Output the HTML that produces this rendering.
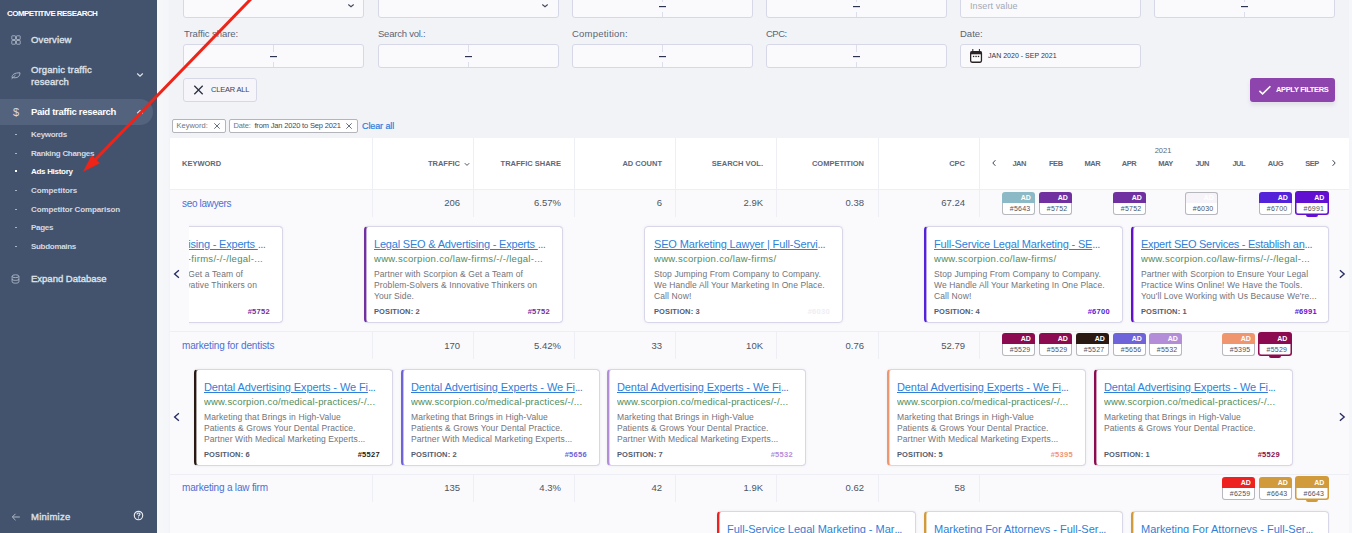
<!DOCTYPE html>
<html>
<head>
<meta charset="utf-8">
<title>Ads History</title>
<style>
*{box-sizing:border-box;margin:0;padding:0}
html,body{width:1352px;height:533px;overflow:hidden}
body{font-family:"Liberation Sans",sans-serif;background:#f2f3f7;position:relative;color:#3a4354}
.abs{position:absolute}
#sb{position:absolute;left:0;top:0;width:157px;height:533px;background:#44536d}
#sb .t{position:absolute;white-space:nowrap;line-height:12px}
#sb .h{left:7px;top:8px;font-size:8px;font-weight:bold;color:#fff;letter-spacing:-.55px}
#sb .m{left:31px;font-size:9.5px;color:#dde2ea;font-weight:normal;-webkit-text-stroke:.35px #dde2ea;letter-spacing:.12px}
#sb .s{left:31px;font-size:8px;color:#d3d9e3;font-weight:bold;letter-spacing:-.3px}
#sb .d{position:absolute;left:15px;width:2px;height:1px;background:#aab3c3}
#sb .act{position:absolute;left:0;top:99px;width:153px;height:26px;background:#54637d;border-radius:0 13px 13px 0}
.inp{position:absolute;width:181px;height:24px;background:#fafafc;border:1px solid #d6d8e7;border-radius:3px}
.inp .v{position:absolute;left:89px;top:0;width:1px;height:100%;background:#dcdeea}
.inp .g{position:absolute;left:86px;top:7px;width:7px;height:10px;background:#fafafc}
.inp .ds{position:absolute;left:86px;top:11px;width:7px;height:1px;background:#2c3350;box-shadow:0 .5px 0 rgba(44,51,80,.35)}
.lbl{position:absolute;top:28px;font-size:9.5px;color:#5b6474;white-space:nowrap;line-height:12px}
.tag{position:absolute;top:119px;height:14px;background:#fff;border:1px solid #b4b5ba;border-radius:2px;font-size:7.5px;line-height:12px;color:#6f747d;white-space:nowrap;padding-left:3.5px}
#tb{position:absolute;left:170px;top:138px;width:1179px;height:395px;background:#fff}
.th{position:absolute;top:20px;font-size:7.5px;font-weight:bold;color:#606878;white-space:nowrap;line-height:12px;letter-spacing:0}
.thr{text-align:right}
.vl{position:absolute;top:0;width:1px;background:#eeeff5}
.row{position:absolute;left:0;width:1179px;height:28px;background:#fafafc;border-top:1px solid #eeeff4}
.row .c{position:absolute;font-size:9.5px;color:#4d5564;white-space:nowrap;line-height:12px;text-align:right}
.row .k{position:absolute;left:12px;font-size:10px;color:#4a70d6;white-space:nowrap;line-height:12px;letter-spacing:-.15px}
.car{position:absolute;left:0;width:1179px;background:#fafafc}
.bd{position:absolute;width:33px;height:23px}
.bd i{position:absolute;left:0;top:0;width:33px;height:11px;display:block;border-radius:3px 3px 0 0}
.bd p{position:absolute;left:0;top:11px;width:33px;height:12px;background:#fff;border:1px solid #b6b8be;border-top:0;border-radius:0 0 3px 3px}
.bd b{position:absolute;right:4.5px;top:1px;font-size:7px;line-height:10px;color:#fff;font-weight:bold;font-style:normal;letter-spacing:-.2px}
.bd u{position:absolute;right:4.5px;top:12px;font-size:7px;line-height:10px;color:#4b5464;text-decoration:none;letter-spacing:.25px}
.bd.sel{width:34px;height:24px}
.bd.sel i{width:34px;height:12px}
.bd.sel p{top:12px;width:34px;height:12px}
.bd.sel b{right:5px;top:2px}
.bd.sel u{right:4.8px;top:13px}
.bd.sel s{position:absolute;left:11px;top:24px;width:12px;height:2px;display:block;border-radius:0 0 2px 2px}
.cd{position:absolute;width:199px;height:96px;background:#fff;border:1px solid #d8d7ea;border-radius:4px;overflow:hidden}
.cd.cl{border-left-width:2px;border-left-style:solid}
.cd.cl>div{margin-left:-1px}
.cd.cl>.id{margin-left:0}
.cd .ti{position:absolute;left:9px;top:10px;width:184px;font-size:11px;line-height:14px;color:#2f7fd8;white-space:nowrap;overflow:hidden;letter-spacing:-.23px}
.cd .ti span{text-decoration:underline}
.cd .ti q{quotes:none;letter-spacing:-.6px}
.cd .ur{position:absolute;left:9px;top:25px;width:184px;font-size:9.5px;line-height:13px;color:#4f8c5b;white-space:nowrap;overflow:hidden;letter-spacing:.3px}
.cd .de{position:absolute;left:9px;top:42px;width:188px;font-size:8.5px;line-height:11px;color:#70737b;white-space:nowrap;letter-spacing:.11px}
.cd .po{position:absolute;left:9px;top:80px;font-size:7.5px;line-height:10px;color:#535d6f;font-weight:bold;white-space:nowrap;letter-spacing:.1px}
.cd .id{position:absolute;right:12px;top:80px;font-size:7.5px;line-height:10px;font-weight:bold;white-space:nowrap;letter-spacing:.3px}
.clip{position:absolute;left:19px;width:1141px;overflow:hidden}
</style>
</head>
<body>

<div class="abs" style="left:157px;top:0;width:12px;height:533px;background:linear-gradient(90deg,#f7f8fa,#f4f5f8)"></div>
<div class="abs" style="left:1349px;top:0;width:3px;height:533px;background:#f5f6f9"></div>
<div id="sb">
  <div class="t h">COMPETITIVE RESEARCH</div>
  <div class="t m" style="top:34px">Overview</div>
  <div class="t m" style="top:64px">Organic traffic</div>
  <div class="t m" style="top:76px">research</div>
  <div class="act"></div>
  <div class="t m" style="top:106px;color:#fff;letter-spacing:-.3px;font-weight:bold;-webkit-text-stroke:0">Paid traffic research</div>
  <div class="t s" style="top:129px">Keywords</div>
  <div class="t s" style="top:148px">Ranking Changes</div>
  <div class="t s" style="top:166px;color:#fff">Ads History</div>
  <div class="t s" style="top:185px;letter-spacing:-.08px">Competitors</div>
  <div class="t s" style="top:204px;letter-spacing:-.12px">Competitor Comparison</div>
  <div class="t s" style="top:222px">Pages</div>
  <div class="t s" style="top:241px">Subdomains</div>
  <div class="t m" style="top:273px;letter-spacing:0px">Expand Database</div>
  <div class="t m" style="top:511px;letter-spacing:.25px">Minimize</div>
  <div class="d" style="top:134px"></div>
  <div class="d" style="top:153px"></div>
  <div class="d" style="top:170px;background:#fff;height:2px"></div>
  <div class="d" style="top:190px"></div>
  <div class="d" style="top:209px"></div>
  <div class="d" style="top:227px"></div>
  <div class="d" style="top:246px"></div>
  <svg class="abs" style="left:11px;top:35px" width="10" height="10" viewBox="0 0 10 10" fill="none" stroke="#b3bccb" stroke-width=".8"><rect x=".8" y=".8" width="3.7" height="3.7" rx=".4"/><rect x="5.5" y=".8" width="3.7" height="3.7" rx=".4"/><rect x=".8" y="5.5" width="3.7" height="3.7" rx=".4"/><rect x="5.5" y="5.5" width="3.7" height="3.7" rx=".4"/></svg>
  <svg class="abs" style="left:11px;top:71px" width="10" height="9" viewBox="0 0 10 9" fill="none" stroke="#aeb7c6" stroke-width=".9"><path d="M1 6.5C1 3.5 3.5 1.8 9 1.8C9 5 7 6.8 4 6.8C2.8 6.8 1.8 6.5 1 6.5Z"/><path d="M.6 7.8L4.5 4.2"/></svg>
  <svg class="abs" style="left:136px;top:72px" width="8" height="6" viewBox="0 0 8 6" fill="none" stroke="#dfe4ec" stroke-width="1.2"><path d="M1.2 1.5L4 4.2L6.8 1.5"/></svg>
  <svg class="abs" style="left:136px;top:109px" width="8" height="6" viewBox="0 0 8 6" fill="none" stroke="#dfe4ec" stroke-width="1.2"><path d="M1.2 4.2L4 1.5L6.8 4.2"/></svg>
  <div class="t" style="left:13px;top:106px;font-size:11px;color:#d5dbe5;font-weight:normal">$</div>
  <svg class="abs" style="left:11px;top:274px" width="9" height="10" viewBox="0 0 9 10" fill="none" stroke="#aeb7c6" stroke-width=".9"><ellipse cx="4.5" cy="2.2" rx="3.4" ry="1.4"/><path d="M1.1 2.2V7.8C1.1 8.6 2.6 9.2 4.5 9.2C6.4 9.2 7.9 8.6 7.9 7.8V2.2"/><path d="M1.1 5C1.1 5.8 2.6 6.4 4.5 6.4C6.4 6.4 7.9 5.8 7.9 5"/></svg>
  <svg class="abs" style="left:11px;top:512px" width="10" height="10" viewBox="0 0 10 10" fill="none" stroke="#aeb7c6" stroke-width="1"><path d="M8.8 5H1.5M4.5 1.8L1.3 5L4.5 8.2"/></svg>
  <svg class="abs" style="left:133px;top:510px" width="11" height="11" viewBox="0 0 11 11" fill="none" stroke="#e6eaf0" stroke-width="1.15"><circle cx="5.5" cy="5.5" r="4.2"/><path d="M4 4.4C4 3.4 4.7 3 5.5 3C6.4 3 7 3.5 7 4.3C7 5.2 5.5 5.4 5.5 6.5" stroke-width="1.1"/><circle cx="5.5" cy="7.9" r=".6" fill="#e2e6ee" stroke="none"/></svg>
</div>

<div class="inp" style="left:183px;top:-6px"></div>
<div class="inp" style="left:378px;top:-6px"></div>
<div class="inp" style="left:572px;top:-6px"><div class="v"></div><div class="g"></div><div class="ds"></div></div>
<div class="inp" style="left:766px;top:-6px"><div class="v"></div><div class="g"></div><div class="ds"></div></div>
<div class="inp" style="left:960px;top:-6px"><span style="position:absolute;left:9px;top:5px;font-size:9px;color:#a3a8b5;line-height:12px;letter-spacing:.1px">Insert value</span></div>
<div class="inp" style="left:1154px;top:-6px"><div class="v"></div><div class="g"></div><div class="ds"></div></div>
<div class="lbl" style="left:184px;letter-spacing:-.06px">Traffic share:</div>
<div class="lbl" style="left:378px;letter-spacing:-.23px">Search vol.:</div>
<div class="lbl" style="left:572px;letter-spacing:.22px">Competition:</div>
<div class="lbl" style="left:766px;letter-spacing:-.5px">CPC:</div>
<div class="lbl" style="left:960px;letter-spacing:0">Date:</div>
<div class="inp" style="left:183px;top:44px"><div class="v"></div><div class="g"></div><div class="ds"></div></div>
<div class="inp" style="left:378px;top:44px"><div class="v"></div><div class="g"></div><div class="ds"></div></div>
<div class="inp" style="left:572px;top:44px"><div class="v"></div><div class="g"></div><div class="ds"></div></div>
<div class="inp" style="left:766px;top:44px"><div class="v"></div><div class="g"></div><div class="ds"></div></div>
<div class="inp" style="left:960px;top:44px"><span style="position:absolute;left:27px;top:5px;font-size:7px;color:#2f3747;line-height:12px;letter-spacing:.01px">JAN 2020 - SEP 2021</span></div>
<svg class="abs" style="left:347px;top:3px" width="8" height="6" viewBox="0 0 8 6" fill="none" stroke="#3f4859" stroke-width="1.05"><path d="M1.3 1.5L4 3.7L6.7 1.5"/></svg>
<svg class="abs" style="left:541px;top:3px" width="8" height="6" viewBox="0 0 8 6" fill="none" stroke="#3f4859" stroke-width="1.05"><path d="M1.3 1.5L4 3.7L6.7 1.5"/></svg>
<svg class="abs" style="left:970px;top:49px" width="13" height="14" viewBox="0 0 13 14"><rect x=".65" y="2.75" width="10.8" height="10.5" rx="1.4" fill="#fff" stroke="#2b2226" stroke-width="1.3"/><rect x=".65" y="2.6" width="10.8" height="2.7" fill="#2b2226"/><rect x="2.3" y="0" width="1" height="3" fill="#2b2226"/><rect x="8.9" y="0" width="1" height="3" fill="#2b2226"/><rect x="2.9" y="6.8" width="1.4" height="1.3" fill="#2b2226"/><rect x="5.35" y="6.8" width="1.4" height="1.3" fill="#2b2226"/><rect x="7.8" y="6.8" width="1.4" height="1.3" fill="#2b2226"/></svg>
<div class="abs" style="left:183px;top:78px;width:74px;height:24px;border:1px solid #d6d8e7;border-radius:3px;background:#f6f6fa"></div>
<svg class="abs" style="left:193px;top:85px" width="11" height="10" viewBox="0 0 11 10" fill="none" stroke="#2a3242" stroke-width="1.3"><path d="M1.3 .8L9.7 9.2M9.7 .8L1.3 9.2"/></svg>
<div class="abs" style="left:211px;top:84px;font-size:7.5px;line-height:12px;color:#3a4354;white-space:nowrap;letter-spacing:-.2px">CLEAR ALL</div>
<div class="abs" style="left:1250px;top:78px;width:85px;height:24px;border-radius:3px;background:#8e44ad;box-shadow:0 3px 4px rgba(70,60,100,.11)"></div>
<svg class="abs" style="left:1258px;top:84px" width="14" height="12" viewBox="0 0 14 12" fill="none" stroke="#fff" stroke-width="1.6"><path d="M1.4 6.9L4.6 9.9L12.4 2.3"/></svg>
<div class="abs" style="left:1276px;top:84px;font-size:7.5px;line-height:12px;color:#fff;font-weight:bold;white-space:nowrap;letter-spacing:-.35px">APPLY FILTERS</div>
<div class="tag" style="left:172px;width:54px">Keyword:</div>
<svg class="abs" style="left:213px;top:122px" width="8" height="8" viewBox="0 0 8 8" fill="none" stroke="#667082" stroke-width="1"><path d="M1.3 1.3L6.7 6.7M6.7 1.3L1.3 6.7"/></svg>
<div class="tag" style="left:229px;width:129px;letter-spacing:-.17px">Date:&nbsp; <span style="color:#3f4858">from Jan 2020 to Sep 2021</span></div>
<svg class="abs" style="left:345px;top:122px" width="8" height="8" viewBox="0 0 8 8" fill="none" stroke="#667082" stroke-width="1"><path d="M1.3 1.3L6.7 6.7M6.7 1.3L1.3 6.7"/></svg>
<div class="abs" style="left:362px;top:120px;font-size:9px;line-height:12px;color:#2b7de0;white-space:nowrap;letter-spacing:-.1px;-webkit-text-stroke:.2px #2b7de0">Clear all</div>
<div id="tb">
<div class="th" style="left:12px">KEYWORD</div>
<div class="th thr" style="right:889px">TRAFFIC</div>
<div class="th thr" style="right:788px">TRAFFIC SHARE</div>
<div class="th thr" style="right:687px">AD COUNT</div>
<div class="th thr" style="right:586px">SEARCH VOL.</div>
<div class="th thr" style="right:485px">COMPETITION</div>
<div class="th thr" style="right:384px">CPC</div>
<svg class="abs" style="left:294px;top:24px" width="6" height="5" viewBox="0 0 6 5" fill="none" stroke="#4a5263" stroke-width="1"><path d="M.8 1.2L3 3.4L5.2 1.2"/></svg>
<div class="th" style="left:834.0px;width:30px;text-align:center;letter-spacing:-.45px;text-indent:.45px">JAN</div>
<div class="th" style="left:870.6px;width:30px;text-align:center;letter-spacing:-.45px;text-indent:.45px">FEB</div>
<div class="th" style="left:907.2px;width:30px;text-align:center;letter-spacing:-.45px;text-indent:.45px">MAR</div>
<div class="th" style="left:943.8px;width:30px;text-align:center;letter-spacing:-.45px;text-indent:.45px">APR</div>
<div class="th" style="left:980.4px;width:30px;text-align:center;letter-spacing:-.45px;text-indent:.45px">MAY</div>
<div class="th" style="left:1017.0px;width:30px;text-align:center;letter-spacing:-.45px;text-indent:.45px">JUN</div>
<div class="th" style="left:1053.6px;width:30px;text-align:center;letter-spacing:-.45px;text-indent:.45px">JUL</div>
<div class="th" style="left:1090.2px;width:30px;text-align:center;letter-spacing:-.45px;text-indent:.45px">AUG</div>
<div class="th" style="left:1126.8px;width:30px;text-align:center;letter-spacing:-.45px;text-indent:.45px">SEP</div>
<div class="th" style="left:978px;width:30px;text-align:center;top:7px;font-weight:normal">2021</div>
<svg class="abs" style="left:821px;top:21px" width="6" height="8" viewBox="0 0 6 8" fill="none" stroke="#3a4354" stroke-width="1"><path d="M4.4 1.2L1.8 4L4.4 6.8"/></svg>
<svg class="abs" style="left:1161px;top:21px" width="6" height="8" viewBox="0 0 6 8" fill="none" stroke="#3a4354" stroke-width="1"><path d="M1.6 1.2L4.2 4L1.6 6.8"/></svg>
<div class="row" style="top:51px">
<div class="k" style="top:8px;letter-spacing:-0.32px">seo lawyers</div>
<div class="c" style="top:7px;right:889px">206</div>
<div class="c" style="top:7px;right:788px">6.57%</div>
<div class="c" style="top:7px;right:687px">6</div>
<div class="c" style="top:7px;right:586px">2.9K</div>
<div class="c" style="top:7px;right:485px">0.38</div>
<div class="c" style="top:7px;right:384px">67.24</div>
<div class="bd" style="left:832px;top:2px"><i style="background:#8bb9c6"></i><p></p><b>AD</b><u>#5643</u></div>
<div class="bd" style="left:869px;top:2px"><i style="background:#7030a0"></i><p></p><b>AD</b><u>#5752</u></div>
<div class="bd" style="left:943px;top:2px"><i style="background:#7030a0"></i><p></p><b>AD</b><u>#5752</u></div>
<div class="bd" style="left:1015px;top:2px"><i style="background:#f6f4f8;border:1px solid #b6b8be;border-bottom:0"></i><p></p><b style="color:#fff">AD</b><u>#6030</u></div>
<div class="bd" style="left:1089px;top:2px"><i style="background:#5423d9"></i><p></p><b>AD</b><u>#6700</u></div>
<div class="bd sel" style="left:1125px;top:1px"><i style="background:#6110d2"></i><p style="border-color:#6110d2;box-shadow:inset .5px 0 0 #6110d2,inset -.5px 0 0 #6110d2,inset 0 -.5px 0 #6110d2"></p><b>AD</b><u>#6991</u><s style="background:#6110d2"></s></div>
</div>
<div class="row" style="top:193px">
<div class="k" style="top:8px;letter-spacing:-0.15px">marketing for dentists</div>
<div class="c" style="top:8px;right:889px">170</div>
<div class="c" style="top:8px;right:788px">5.42%</div>
<div class="c" style="top:8px;right:687px">33</div>
<div class="c" style="top:8px;right:586px">10K</div>
<div class="c" style="top:8px;right:485px">0.76</div>
<div class="c" style="top:8px;right:384px">52.79</div>
<div class="bd" style="left:832px;top:1px"><i style="background:#8b0a50"></i><p></p><b>AD</b><u>#5529</u></div>
<div class="bd" style="left:869px;top:1px"><i style="background:#8b0a50"></i><p></p><b>AD</b><u>#5529</u></div>
<div class="bd" style="left:906px;top:1px"><i style="background:#2a1913"></i><p></p><b>AD</b><u>#5527</u></div>
<div class="bd" style="left:943px;top:1px"><i style="background:#6e63d9"></i><p></p><b>AD</b><u>#5656</u></div>
<div class="bd" style="left:979px;top:1px"><i style="background:#b48dd8"></i><p></p><b>AD</b><u>#5532</u></div>
<div class="bd" style="left:1052px;top:1px"><i style="background:#f0966f"></i><p></p><b>AD</b><u>#5395</u></div>
<div class="bd sel" style="left:1088px;top:0px"><i style="background:#8b0a50"></i><p style="border-color:#8b0a50;box-shadow:inset .5px 0 0 #8b0a50,inset -.5px 0 0 #8b0a50,inset 0 -.5px 0 #8b0a50"></p><b>AD</b><u>#5529</u><s style="background:#8b0a50"></s></div>
</div>
<div class="row" style="top:336px">
<div class="k" style="top:7px;letter-spacing:-0.18px">marketing a law firm</div>
<div class="c" style="top:7px;right:889px">135</div>
<div class="c" style="top:7px;right:788px">4.3%</div>
<div class="c" style="top:7px;right:687px">42</div>
<div class="c" style="top:7px;right:586px">1.9K</div>
<div class="c" style="top:7px;right:485px">0.62</div>
<div class="c" style="top:7px;right:384px">58</div>
<div class="bd" style="left:1052px;top:2px"><i style="background:#ee2121"></i><p></p><b>AD</b><u>#6259</u></div>
<div class="bd" style="left:1089px;top:2px"><i style="background:#d19b3c"></i><p></p><b>AD</b><u>#6643</u></div>
<div class="bd sel" style="left:1125px;top:1px"><i style="background:#d19b3c"></i><p style="border-color:#d19b3c;box-shadow:inset .5px 0 0 #d19b3c,inset -.5px 0 0 #d19b3c,inset 0 -.5px 0 #d19b3c"></p><b>AD</b><u>#6643</u><s style="background:#d19b3c"></s></div>
</div>
<div class="vl" style="left:202px;height:79px"></div>
<div class="vl" style="left:202px;top:193px;height:28px"></div>
<div class="vl" style="left:202px;top:336px;height:28px"></div>
<div class="vl" style="left:303px;height:79px"></div>
<div class="vl" style="left:303px;top:193px;height:28px"></div>
<div class="vl" style="left:303px;top:336px;height:28px"></div>
<div class="vl" style="left:404px;height:79px"></div>
<div class="vl" style="left:404px;top:193px;height:28px"></div>
<div class="vl" style="left:404px;top:336px;height:28px"></div>
<div class="vl" style="left:505px;height:79px"></div>
<div class="vl" style="left:505px;top:193px;height:28px"></div>
<div class="vl" style="left:505px;top:336px;height:28px"></div>
<div class="vl" style="left:606px;height:79px"></div>
<div class="vl" style="left:606px;top:193px;height:28px"></div>
<div class="vl" style="left:606px;top:336px;height:28px"></div>
<div class="vl" style="left:708px;height:79px"></div>
<div class="vl" style="left:708px;top:193px;height:28px"></div>
<div class="vl" style="left:708px;top:336px;height:28px"></div>
<div class="vl" style="left:809px;height:79px"></div>
<div class="vl" style="left:809px;top:193px;height:28px"></div>
<div class="vl" style="left:809px;top:336px;height:28px"></div>
<div class="car" style="top:79px;height:114px"></div>
<div class="clip" style="top:79px;height:114px">
<div class="cd cl" style="left:-105px;top:9px;height:97px;width:199px;border-left-color:#7030a0;box-shadow:inset .4px 0 0 #7030a0,0 0 3px rgba(60,60,90,.07)"><div class="ti" style="letter-spacing:-0.2px"><span>Legal SEO &amp; Advertising - Experts </span><q>...</q></div><div class="ur" style="letter-spacing:0.3px">www.scorpion.co/law-firms/-/-/legal-...</div><div class="de">Partner with Scorpion &amp; Get a Team of<br>Problem-Solvers &amp; Innovative Thinkers on<br>Your Side.</div><div class="po">POSITION: 2</div><div class="id" style="color:#7030a0;right:12px">#5752</div></div>
<div class="cd cl" style="left:175px;top:9px;height:97px;width:199px;border-left-color:#7030a0;box-shadow:inset .4px 0 0 #7030a0,0 0 3px rgba(60,60,90,.07)"><div class="ti" style="letter-spacing:-0.2px"><span>Legal SEO &amp; Advertising - Experts </span><q>...</q></div><div class="ur" style="letter-spacing:0.3px">www.scorpion.co/law-firms/-/-/legal-...</div><div class="de">Partner with Scorpion &amp; Get a Team of<br>Problem-Solvers &amp; Innovative Thinkers on<br>Your Side.</div><div class="po">POSITION: 2</div><div class="id" style="color:#7030a0;right:12px">#5752</div></div>
<div class="cd" style="left:455px;top:9px;height:97px;width:199px;box-shadow:0 0 3px rgba(60,60,90,.07)"><div class="ti" style="letter-spacing:-0.15px"><span>SEO Marketing Lawyer | Full-Servi</span><q>...</q></div><div class="ur" style="letter-spacing:0.3px">www.scorpion.co/law-firms/</div><div class="de">Stop Jumping From Company to Company.<br>We Handle All Your Marketing In One Place.<br>Call Now!</div><div class="po">POSITION: 3</div><div class="id" style="color:#f0eef4;right:12px">#6030</div></div>
<div class="cd cl" style="left:735px;top:9px;height:97px;width:199px;border-left-color:#5423d9;box-shadow:inset .4px 0 0 #5423d9,0 0 3px rgba(60,60,90,.07)"><div class="ti" style="letter-spacing:-0.17px"><span>Full-Service Legal Marketing - SE</span><q>...</q></div><div class="ur" style="letter-spacing:0.3px">www.scorpion.co/law-firms/</div><div class="de">Stop Jumping From Company to Company.<br>We Handle All Your Marketing In One Place.<br>Call Now!</div><div class="po">POSITION: 4</div><div class="id" style="color:#5423d9;right:12px">#6700</div></div>
<div class="cd cl" style="left:942px;top:9px;height:97px;width:198px;border-left-color:#6110d2;box-shadow:inset .4px 0 0 #6110d2,0 0 3px rgba(60,60,90,.07)"><div class="ti" style="letter-spacing:-0.28px"><span>Expert SEO Services - Establish an</span><q>...</q></div><div class="ur" style="letter-spacing:0.3px">www.scorpion.co/law-firms/-/-/legal-...</div><div class="de">Partner with Scorpion to Ensure Your Legal<br>Practice Wins Online! We Have the Tools.<br>You'll Love Working with Us Because We're...</div><div class="po">POSITION: 1</div><div class="id" style="color:#6110d2;right:11px">#6991</div></div>
</div>
<div class="car" style="top:221px;height:115px"></div>
<div class="clip" style="top:221px;height:115px">
<div class="cd cl" style="left:5px;top:10px;height:97px;width:199px;border-left-color:#2a1913;box-shadow:inset .4px 0 0 #2a1913,0 0 3px rgba(60,60,90,.07)"><div class="ti" style="letter-spacing:-0.1px"><span>Dental Advertising Experts - We Fi</span><q>...</q></div><div class="ur" style="letter-spacing:0.18px">www.scorpion.co/medical-practices/-/...</div><div class="de">Marketing that Brings in High-Value<br>Patients &amp; Grows Your Dental Practice.<br>Partner With Medical Marketing Experts...</div><div class="po">POSITION: 6</div><div class="id" style="color:#2a1913;right:12px">#5527</div></div>
<div class="cd cl" style="left:212px;top:10px;height:97px;width:199px;border-left-color:#6e63d9;box-shadow:inset .4px 0 0 #6e63d9,0 0 3px rgba(60,60,90,.07)"><div class="ti" style="letter-spacing:-0.1px"><span>Dental Advertising Experts - We Fi</span><q>...</q></div><div class="ur" style="letter-spacing:0.18px">www.scorpion.co/medical-practices/-/...</div><div class="de">Marketing that Brings in High-Value<br>Patients &amp; Grows Your Dental Practice.<br>Partner With Medical Marketing Experts...</div><div class="po">POSITION: 2</div><div class="id" style="color:#6e63d9;right:12px">#5656</div></div>
<div class="cd cl" style="left:418px;top:10px;height:97px;width:199px;border-left-color:#b48dd8;box-shadow:inset .4px 0 0 #b48dd8,0 0 3px rgba(60,60,90,.07)"><div class="ti" style="letter-spacing:-0.1px"><span>Dental Advertising Experts - We Fi</span><q>...</q></div><div class="ur" style="letter-spacing:0.18px">www.scorpion.co/medical-practices/-/...</div><div class="de">Marketing that Brings in High-Value<br>Patients &amp; Grows Your Dental Practice.<br>Partner With Medical Marketing Experts...</div><div class="po">POSITION: 7</div><div class="id" style="color:#b48dd8;right:12px">#5532</div></div>
<div class="cd cl" style="left:698px;top:10px;height:97px;width:199px;border-left-color:#f0966f;box-shadow:inset .4px 0 0 #f0966f,0 0 3px rgba(60,60,90,.07)"><div class="ti" style="letter-spacing:-0.1px"><span>Dental Advertising Experts - We Fi</span><q>...</q></div><div class="ur" style="letter-spacing:0.18px">www.scorpion.co/medical-practices/-/...</div><div class="de">Marketing that Brings in High-Value<br>Patients &amp; Grows Your Dental Practice.<br>Partner With Medical Marketing Experts...</div><div class="po">POSITION: 5</div><div class="id" style="color:#f0966f;right:12px">#5395</div></div>
<div class="cd cl" style="left:905px;top:10px;height:97px;width:199px;border-left-color:#8b0a50;box-shadow:inset .4px 0 0 #8b0a50,0 0 3px rgba(60,60,90,.07)"><div class="ti" style="letter-spacing:-0.1px"><span>Dental Advertising Experts - We Fi</span><q>...</q></div><div class="ur" style="letter-spacing:0.18px">www.scorpion.co/medical-practices/-/...</div><div class="de">Marketing that Brings in High-Value<br>Patients &amp; Grows Your Dental Practice.</div><div class="po">POSITION: 1</div><div class="id" style="color:#8b0a50;right:12px">#5529</div></div>
</div>
<div class="car" style="top:364px;height:40px"></div>
<div class="clip" style="top:364px;height:40px">
<div class="cd cl" style="left:528px;top:9px;height:96px;width:199px;border-left-color:#ee2121;box-shadow:inset .4px 0 0 #ee2121,0 0 3px rgba(60,60,90,.07)"><div class="ti" style="letter-spacing:-0.02px"><span>Full-Service Legal Marketing - Mar</span><q>...</q></div><div class="ur" style="letter-spacing:0.3px">www.scorpion.co/law-firms/</div><div class="de">Stop Jumping From Company to Company.<br>We Handle All Your Marketing In One Place.<br>Call Now!</div><div class="po">POSITION: 1</div><div class="id" style="color:#ee2121;right:12px"></div></div>
<div class="cd cl" style="left:735px;top:9px;height:96px;width:199px;border-left-color:#d19b3c;box-shadow:inset .4px 0 0 #d19b3c,0 0 3px rgba(60,60,90,.07)"><div class="ti" style="letter-spacing:-0.02px"><span>Marketing For Attorneys - Full-Ser</span><q>...</q></div><div class="ur" style="letter-spacing:0.3px">www.scorpion.co/law-firms/</div><div class="de">Stop Jumping From Company to Company.<br>We Handle All Your Marketing In One Place.<br>Call Now!</div><div class="po">POSITION: 1</div><div class="id" style="color:#d19b3c;right:12px"></div></div>
<div class="cd cl" style="left:942px;top:9px;height:96px;width:198px;border-left-color:#d19b3c;box-shadow:inset .4px 0 0 #d19b3c,0 0 3px rgba(60,60,90,.07)"><div class="ti" style="letter-spacing:-0.02px"><span>Marketing For Attorneys - Full-Ser</span><q>...</q></div><div class="ur" style="letter-spacing:0.3px">www.scorpion.co/law-firms/</div><div class="de">Stop Jumping From Company to Company.<br>We Handle All Your Marketing In One Place.<br>Call Now!</div><div class="po">POSITION: 1</div><div class="id" style="color:#d19b3c;right:11px"></div></div>
</div>
<svg class="abs" style="left:2px;top:131px" width="9" height="10" viewBox="0 0 9 10" fill="none" stroke="#252c63" stroke-width="1.35"><path d="M6.9 1.2L2.6 5L6.9 8.8"/></svg>
<svg class="abs" style="left:1168px;top:131px" width="9" height="10" viewBox="0 0 9 10" fill="none" stroke="#252c63" stroke-width="1.35"><path d="M1.9 1.2L6.2 5L1.9 8.8"/></svg>
<svg class="abs" style="left:2px;top:274px" width="9" height="10" viewBox="0 0 9 10" fill="none" stroke="#252c63" stroke-width="1.35"><path d="M6.9 1.2L2.6 5L6.9 8.8"/></svg>
<svg class="abs" style="left:1168px;top:274px" width="9" height="10" viewBox="0 0 9 10" fill="none" stroke="#252c63" stroke-width="1.35"><path d="M1.9 1.2L6.2 5L1.9 8.8"/></svg>
</div>

<svg class="abs" style="left:0;top:0;pointer-events:none" width="300" height="200" viewBox="0 0 300 200"><path d="M259.6 -10L95.2 159.8" stroke="#ee2419" stroke-width="3" fill="none"/><path d="M83 171.8L91.7 155L99.8 163.3Z" fill="#ee2419"/></svg>
</body>
</html>
